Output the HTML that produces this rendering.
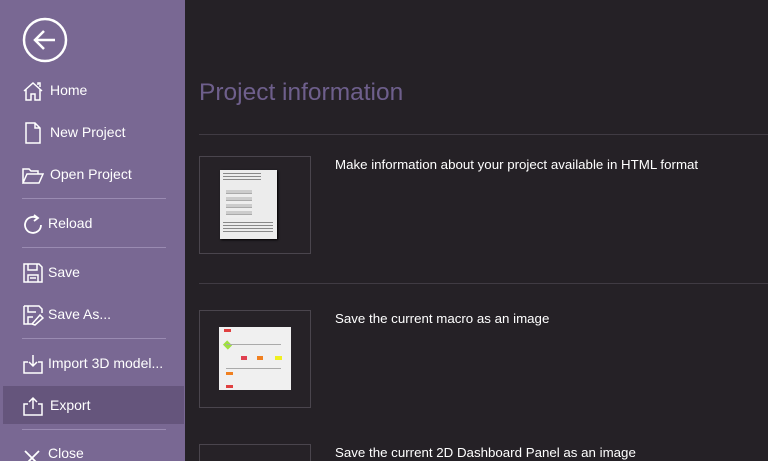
<!DOCTYPE html>
<html style="width:768px;height:461px;overflow:hidden"><head><style>
*{margin:0;padding:0;box-sizing:border-box}
body{width:768px;height:461px;overflow:hidden;background:#252126;font-family:"Liberation Sans",sans-serif;position:relative}
#sb{position:absolute;left:0;top:0;width:185px;height:461px;background:#796893}
.it{position:absolute;left:0;width:185px;height:38px;color:#fff;font-size:14px}
.it span{position:absolute;left:50px;top:11px}
.it svg{position:absolute;left:22px;top:9px}
.sep{position:absolute;left:22px;width:144px;height:1px;background:#9a8bb2}
.hl{background:#65557c;left:3px;width:181px}
.hr{position:absolute;left:199px;right:0;height:1px;background:#403b43}
.card{position:absolute;left:199px;width:112px;height:98px;border:1px solid #4a454d;background:#262227}
.txt{position:absolute;left:335px;color:#fff;font-size:13.3px}
</style></head><body>
<div id="sb">
<svg style="position:absolute;left:22px;top:17px" width="46" height="46" viewBox="0 0 46 46"><circle cx="23" cy="23" r="21" fill="none" stroke="#fff" stroke-width="2.5"/><path d="M33 23H14M22 14l-9 9 9 9" fill="none" stroke="#fff" stroke-width="2.5"/></svg>
<div class="it" style="top:71px"><svg width="22" height="22" viewBox="0 0 22 22" fill="none" stroke="#fff" stroke-width="1.5"><path d="M2 11L11 3l9 8M4 9v11h5v-6h4v6h5V9M16 5V3h2v4"/></svg><span>Home</span></div>
<div class="it" style="top:113px"><svg width="22" height="22" viewBox="0 0 22 22" fill="none" stroke="#fff" stroke-width="1.5"><path d="M4 1h9l5 5v15H4zM13 1v5h5"/></svg><span>New Project</span></div>
<div class="it" style="top:155px"><svg width="22" height="22" viewBox="0 0 22 22" fill="none" stroke="#fff" stroke-width="1.5"><path d="M1 19V5h6l2 2h7v3M1 19l4-9h16l-4 9z"/></svg><span>Open Project</span></div>
<div class="sep" style="top:198px"></div>
<div class="it" style="top:204px"><svg width="22" height="22" viewBox="0 0 22 22" fill="none" stroke="#fff" stroke-width="1.8"><path d="M15 5A8 8 0 1 0 19 12"/><path d="M12 2l4 3-4 3" /></svg><span style="left:48px">Reload</span></div>
<div class="sep" style="top:247px"></div>
<div class="it" style="top:253px"><svg width="22" height="22" viewBox="0 0 22 22" fill="none" stroke="#fff" stroke-width="1.5"><path d="M2 2h15l3 3v15H2zM6 2v6h9V2M6 20v-7h10v7M8 16h6"/></svg><span style="left:48px">Save</span></div>
<div class="it" style="top:295px"><svg width="22" height="22" viewBox="0 0 22 22" fill="none" stroke="#fff" stroke-width="1.5"><path d="M2 2h15l3 3v4M2 2v18h9M6 2v6h8M6 20v-7h5M10 20l8-9 3 3-8 7z"/></svg><span style="left:48px">Save As...</span></div>
<div class="sep" style="top:338px"></div>
<div class="it" style="top:344px"><svg width="22" height="22" viewBox="0 0 22 22" fill="none" stroke="#fff" stroke-width="1.5"><path d="M6 9H2v11h18V9h-4M11 2v11M7 9l4 4 4-4"/></svg><span style="left:48px">Import 3D model...</span></div>
<div class="it hl" style="top:386px"><svg style="left:19px" width="22" height="22" viewBox="0 0 22 22" fill="none" stroke="#fff" stroke-width="1.5"><path d="M6 9H2v11h18V9h-4M11 14V3M7 7l4-4 4 4"/></svg><span style="left:47px">Export</span></div>
<div class="sep" style="top:429px"></div>
<div class="it" style="top:434px"><svg width="22" height="22" viewBox="0 0 22 22" fill="none" stroke="#fff" stroke-width="1.8"><path d="M3 8l14 14M17 8L3 22"/></svg><span style="left:48px">Close</span></div>
</div>
<div style="position:absolute;left:199px;top:79px;color:#6e5f8c;font-size:24.5px">Project information</div>
<div class="hr" style="top:134px"></div>
<div class="card" style="top:156px">
<div style="position:absolute;left:20px;top:13px;width:57px;height:69px;background:#ececec;box-shadow:1px 1px 2px #000"><div style="position:absolute;left:6px;top:20px;width:26px;height:28px;background:repeating-linear-gradient(#ccc 0 3px,#aaa 3px 4px,#eee 4px 7px)"></div><div style="position:absolute;left:3px;top:52px;width:50px;height:12px;background:repeating-linear-gradient(#888 0 1px,#ececec 1px 3px)"></div><div style="position:absolute;left:3px;top:3px;width:38px;height:8px;background:repeating-linear-gradient(#888 0 1px,#ececec 1px 3px)"></div></div>
</div>
<div class="txt" style="top:157px">Make information about your project available in HTML format</div>
<div class="hr" style="top:283px"></div>
<div class="card" style="top:310px">
<div style="position:absolute;left:19px;top:16px;width:72px;height:63px;background:#f0f0f0"><div style="position:absolute;left:5px;top:2px;width:7px;height:3px;background:#e04040"></div><div style="position:absolute;left:5px;top:15px;width:7px;height:6px;background:#9fe040;transform:rotate(45deg)"></div><div style="position:absolute;left:22px;top:29px;width:6px;height:4px;background:#e04050"></div><div style="position:absolute;left:38px;top:29px;width:6px;height:4px;background:#f08020"></div><div style="position:absolute;left:56px;top:29px;width:7px;height:4px;background:#f0f020"></div><div style="position:absolute;left:7px;top:45px;width:7px;height:3px;background:#f08020"></div><div style="position:absolute;left:7px;top:58px;width:7px;height:3px;background:#e04040"></div><div style="position:absolute;left:7px;top:17px;width:55px;height:1px;background:#aaa"></div><div style="position:absolute;left:7px;top:41px;width:55px;height:1px;background:#aaa"></div></div>
</div>
<div class="txt" style="top:311px">Save the current macro as an image</div>
<div class="card" style="top:444px;height:17px;border-bottom:none"></div>
<div class="txt" style="top:445px">Save the current 2D Dashboard Panel as an image</div>
</body></html>
